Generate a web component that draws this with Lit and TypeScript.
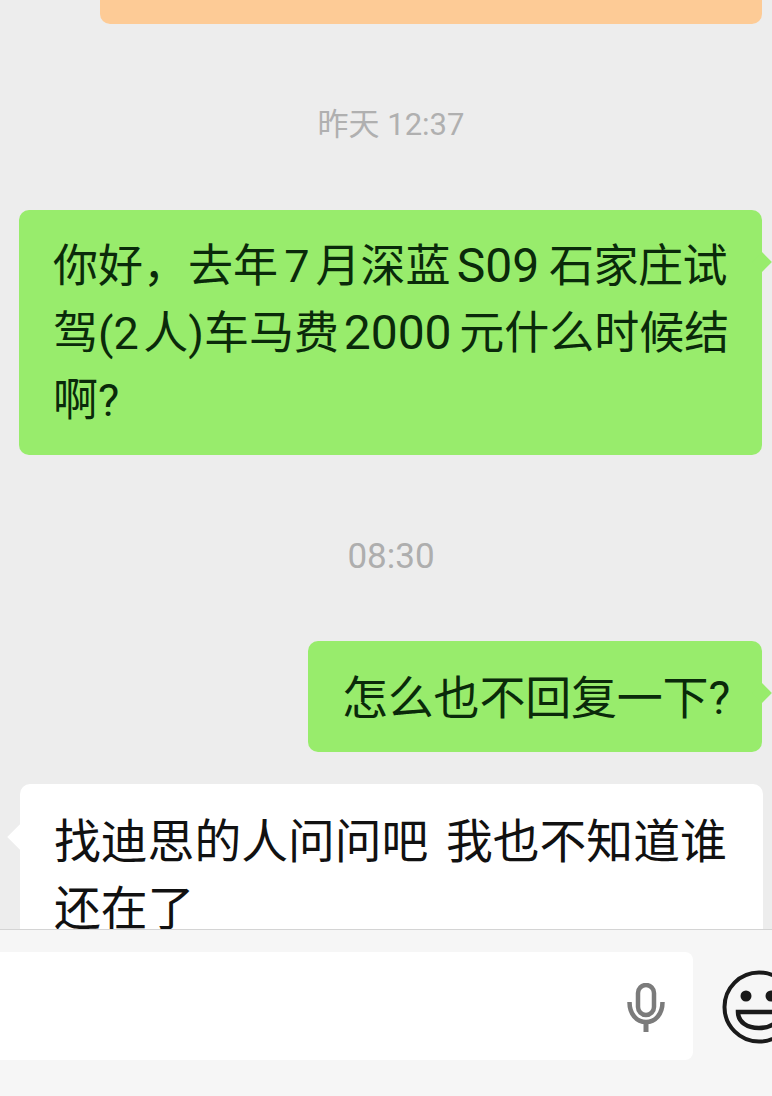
import { LitElement, html, css } from "lit";
import { customElement } from "lit/decorators.js";

@customElement("app-root")
export class AppRoot extends LitElement {
  static styles = css`
    :host { display: block; width: 772px; height: 1096px; overflow: hidden; background: #ededed;
      font-family: Roboto, "Noto Sans CJK SC", sans-serif; color: #0d0d0d; }
    .page { height: 1096px; display: flex; flex-direction: column; }
    .chat { height: 929px; flex: none; overflow: hidden; display: flex; flex-direction: column; }
    .row { display: flex; justify-content: flex-end; padding-right: 10px; }
    .orange { width: 662px; height: 24px; background: #fdcb96; border-radius: 0 0 10px 10px; }
    .time { text-align: center; font-size: 31px; line-height: 40px; color: #b0b0b0; padding-left: 10px; }
    .t1 { margin-top: 81px; }
    .t2 { margin-top: 82px; color: #aeaeae; font-size: 35px; line-height: 40px; }
    .bubble { position: relative; box-sizing: border-box; border-radius: 10px; font-size: 45px; line-height: 67px; white-space: nowrap; }
    .green { background: #98ec6c; color: #0a2a0a; }
    .b1 { width: 743px; margin-top: 65px; padding: 23px 34px 21px; word-spacing: -3.5px; }
    .tight { word-spacing: -5px; }
    .tighter { word-spacing: -6.5px; }
    .num { font-size: 48px; line-height: 1; }
    .shift { margin-left: 2px; letter-spacing: -0.5px; }
    .b2 { width: 454px; margin-top: 64px; padding: 24px 34px 20px; font-size: 46px; letter-spacing: -0.2px; }
    .arrow { position: absolute; width: 14px; height: 14px; transform: rotate(45deg); background: inherit; }
    .green .arrow { right: -7px; top: 45px; }
    .white-row { display: flex; justify-content: flex-start; padding-left: 20px; margin-top: 32px; }
    .white { width: 743px; background: #fff; color: #111; padding: 25px 34px 21px; font-size: 46.8px; word-spacing: 6px; }
    .white .arrow { left: -9px; top: 44px; width: 18px; height: 18px; }
    .composer { flex: 1; border-top: 1px solid #d4d4d4; background: #f6f6f6; box-sizing: border-box; display: flex; align-items: flex-start; padding-top: 22px; gap: 29px; }
    .input { width: 693px; height: 108px; flex: none; background: #fff; border-radius: 0 8px 8px 0; display: flex; align-items: center; justify-content: flex-end; padding-right: 28px; box-sizing: border-box; }
    .mic { width: 38px; height: 49px; display: block; margin-top: 3px; }
    .emoji { width: 74px; height: 74px; flex: none; margin-top: 18px; display: block; }
  `;

  render() {
    return html`
      <div class="page">
        <div class="chat">
          <div class="row"><div class="orange"></div></div>
          <div class="time t1">昨天 12:37</div>
          <div class="row">
            <div class="bubble green b1"><span class="tight">你好，去年 7 月深蓝 <span class="num">S09</span></span> <span class="shift">石家庄试</span><br /><span class="tighter">驾(2 人)车马费 <span class="num">2000</span></span> 元什么时候结<br />啊?<span class="arrow"></span></div>
          </div>
          <div class="time t2">08:30</div>
          <div class="row">
            <div class="bubble green b2">怎么也不回复一下?<span class="arrow"></span></div>
          </div>
          <div class="white-row">
            <div class="bubble white">找迪思的人问问吧 我也不知道谁<br />还在了<span class="arrow"></span></div>
          </div>
        </div>
        <div class="composer">
          <div class="input">
            <svg class="mic" viewBox="0 0 38 49" fill="none">
              <rect x="11" y="2" width="16" height="30" rx="8" stroke="#7b7b7b" stroke-width="4.5"/>
              <path d="M2.5 19c0 12 7 20 16.500 20s16.500-8 16.500-20" stroke="#7b7b7b" stroke-width="4.500"/>
              <path d="M19 39v10" stroke="#7b7b7b" stroke-width="5"/>
            </svg>
          </div>
          <svg class="emoji" viewBox="0 0 74 74" fill="none">
            <circle cx="37" cy="37" r="34.500" stroke="#1a1a1a" stroke-width="4"/>
            <circle cx="24" cy="26" r="5.500" fill="#1a1a1a"/>
            <circle cx="49" cy="26" r="5.500" fill="#1a1a1a"/>
            <path d="M16 42h42c0 10-9 16-21 16s-21-6-21-16z" stroke="#1a1a1a" stroke-width="4.500"/>
          </svg>
        </div>
      </div>
    `;
  }
}
